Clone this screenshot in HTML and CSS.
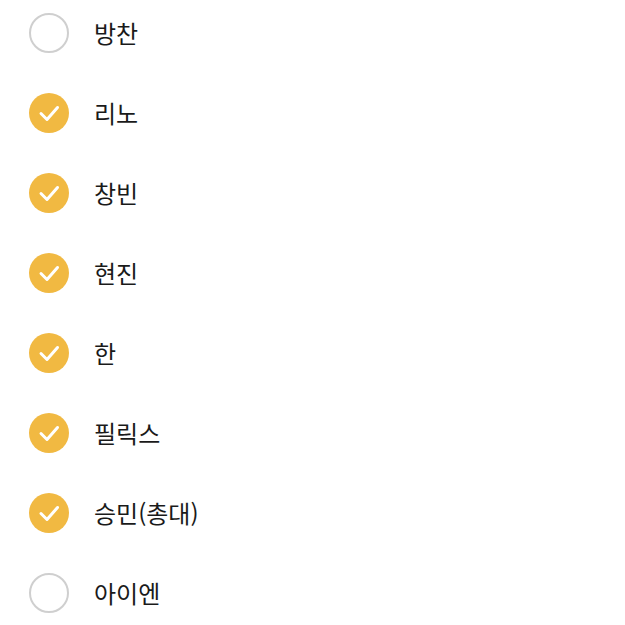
FILE: index.html
```html
<!DOCTYPE html>
<html lang="ko">
<head>
<meta charset="utf-8">
<link rel="stylesheet" href="styles.css">
</head>
<body>
<ul class="list">
  <li class="item"><span class="box"></span><span class="label">방찬</span></li>
  <li class="item"><span class="box on"><svg viewBox="0 0 40 40"><path d="M12 20.5 L18 26.5 L28.5 14.5"/></svg></span><span class="label">리노</span></li>
  <li class="item"><span class="box on"><svg viewBox="0 0 40 40"><path d="M12 20.5 L18 26.5 L28.5 14.5"/></svg></span><span class="label">창빈</span></li>
  <li class="item"><span class="box on"><svg viewBox="0 0 40 40"><path d="M12 20.5 L18 26.5 L28.5 14.5"/></svg></span><span class="label">현진</span></li>
  <li class="item"><span class="box on"><svg viewBox="0 0 40 40"><path d="M12 20.5 L18 26.5 L28.5 14.5"/></svg></span><span class="label">한</span></li>
  <li class="item"><span class="box on"><svg viewBox="0 0 40 40"><path d="M12 20.5 L18 26.5 L28.5 14.5"/></svg></span><span class="label">필릭스</span></li>
  <li class="item"><span class="box on"><svg viewBox="0 0 40 40"><path d="M12 20.5 L18 26.5 L28.5 14.5"/></svg></span><span class="label">승민(총대)</span></li>
  <li class="item"><span class="box"></span><span class="label">아이엔</span></li>
</ul>
</body>
</html>
```
FILE: styles.css
```css
html, body {
  margin: 0;
  padding: 0;
  background: #ffffff;
}
.list {
  list-style: none;
  margin: 0;
  padding: 0 0 0 29px;
  display: flex;
  flex-direction: column;
  font-family: "Noto Sans CJK KR", "Noto Sans", sans-serif;
}
.item {
  height: 80px;
  display: flex;
  align-items: center;
  margin-top: -7px;
}
.item + .item {
  margin-top: 0;
}
.box {
  width: 40px;
  height: 40px;
  border-radius: 50%;
  box-sizing: border-box;
  border: 2px solid #cfcfcf;
  background: #ffffff;
  flex: none;
  display: flex;
  align-items: center;
  justify-content: center;
}
.box.on {
  border: none;
  background: #f1b942;
}
.box svg {
  width: 40px;
  height: 40px;
}
.box svg path {
  fill: none;
  stroke: #ffffff;
  stroke-width: 3;
  stroke-linecap: round;
  stroke-linejoin: round;
}
.label {
  margin-left: 25px;
  font-size: 24px;
  font-weight: 400;
  color: #1a1a1a;
  line-height: 1;
}
```
